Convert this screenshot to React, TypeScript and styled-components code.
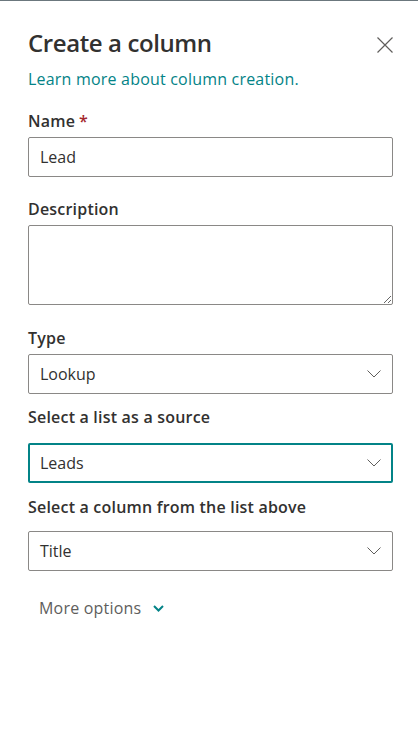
import React from "react";
import styled, { createGlobalStyle } from "styled-components";

const GlobalStyle = createGlobalStyle`
  html, body {
    margin: 0;
    padding: 0;
    background: #ffffff;
  }
  body {
    font-family: "Open Sans", "Noto Sans", "Liberation Sans", sans-serif;
    color: #323130;
  }
`;

const Panel = styled.div`
  width: 418px;
  height: 732px;
  box-sizing: border-box;
  border-top: 1px solid #6b777d;
  background: #ffffff;
  display: flex;
  flex-direction: column;
`;

const Header = styled.div`
  display: flex;
  align-items: flex-start;
  justify-content: space-between;
  padding: 26px 25px 0 28px;
`;

const Title = styled.h1`
  margin: 0;
  font-size: 24px;
  line-height: 32px;
  font-weight: 600;
  color: #323130;
  letter-spacing: -0.4px;
`;

const CloseButton = styled.button`
  width: 16px;
  height: 16px;
  padding: 0;
  margin-top: 10px;
  border: none;
  background: none;
  color: #605e5c;
  cursor: pointer;
  display: flex;
`;

const Body = styled.div`
  padding: 0 25px 0 28px;
  display: flex;
  flex-direction: column;
`;

const LearnLink = styled.a`
  display: block;
  margin-top: 8px;
  font-size: 16px;
  line-height: 24px;
  color: #038387;
  text-decoration: none;
  letter-spacing: 0.2px;
`;

const Field = styled.div<{ $gap?: number }>`
  display: flex;
  flex-direction: column;
  margin-top: ${(p) => p.$gap ?? 16}px;
`;

const Label = styled.label<{ $below?: number }>`
  font-size: 16px;
  line-height: 22px;
  font-weight: 600;
  color: #323130;
  padding-bottom: ${(p) => p.$below ?? 5}px;
  letter-spacing: 0.2px;
`;

const Required = styled.span`
  color: #a4262c;
  margin-left: 4px;
`;

const TextInput = styled.input`
  box-sizing: border-box;
  height: 40px;
  width: 100%;
  border: 1px solid #8a8886;
  border-radius: 2px;
  padding: 0 11px;
  font-family: inherit;
  font-size: 16px;
  color: #323130;
  outline: none;
`;

const TextArea = styled.textarea`
  box-sizing: border-box;
  height: 80px;
  width: 100%;
  border: 1px solid #8a8886;
  border-radius: 2px;
  padding: 6px 11px;
  font-family: inherit;
  font-size: 16px;
  resize: vertical;
  outline: none;
  display: block;
`;

const Dropdown = styled.div<{ $focused?: boolean }>`
  box-sizing: border-box;
  height: 40px;
  width: 100%;
  border: ${(p) => (p.$focused ? "2px solid #038387" : "1px solid #8a8886")};
  border-radius: 2px;
  padding: 0 ${(p) => (p.$focused ? 10 : 11)}px;
  display: flex;
  align-items: center;
  justify-content: space-between;
  font-size: 16px;
  color: #323130;
`;

const Caret = styled.span`
  display: flex;
  color: #605e5c;
`;

const MoreOptions = styled.button`
  align-self: flex-start;
  margin-top: 26px;
  margin-left: 11px;
  padding: 0;
  border: none;
  background: none;
  display: flex;
  align-items: center;
  gap: 12px;
  font-family: inherit;
  font-size: 16px;
  line-height: 22px;
  color: #605e5c;
  cursor: pointer;
  letter-spacing: 0.2px;
`;

const ThinChevron = () => (
  <svg width="14" height="8" viewBox="0 0 14 8" fill="none">
    <path d="M0.5 0.5 L7 7 L13.5 0.5" stroke="currentColor" strokeWidth="1" />
  </svg>
);

const BoldChevron = () => (
  <svg width="11" height="7" viewBox="0 0 11 7" fill="none">
    <path d="M1 1 L5.5 5.5 L10 1" stroke="#038387" strokeWidth="2" />
  </svg>
);

const CloseIcon = () => (
  <svg width="16" height="16" viewBox="0 0 16 16" fill="none">
    <path d="M0.5 0.5 L15.5 15.5 M15.5 0.5 L0.5 15.5" stroke="currentColor" strokeWidth="1.2" />
  </svg>
);

const Select = ({ value, focused }: { value: string; focused?: boolean }) => (
  <Dropdown $focused={focused}>
    <span>{value}</span>
    <Caret>
      <ThinChevron />
    </Caret>
  </Dropdown>
);

export default function App() {
  return (
    <>
      <GlobalStyle />
      <Panel>
        <Header>
          <Title>Create a column</Title>
          <CloseButton aria-label="Close">
            <CloseIcon />
          </CloseButton>
        </Header>
        <Body>
          <LearnLink href="#">Learn more about column creation.</LearnLink>

          <Field $gap={19}>
            <Label>
              Name<Required>*</Required>
            </Label>
            <TextInput defaultValue="Lead" />
          </Field>

          <Field $gap={21}>
            <Label>Description</Label>
            <TextArea />
          </Field>

          <Field $gap={22}>
            <Label>Type</Label>
            <Select value="Lookup" />
          </Field>

          <Field $gap={12}>
            <Label $below={15}>Select a list as a source</Label>
            <Select value="Leads" focused />
          </Field>

          <Field $gap={13}>
            <Label $below={13}>Select a column from the list above</Label>
            <Select value="Title" />
          </Field>

          <MoreOptions>
            More options
            <BoldChevron />
          </MoreOptions>
        </Body>
      </Panel>
    </>
  );
}
